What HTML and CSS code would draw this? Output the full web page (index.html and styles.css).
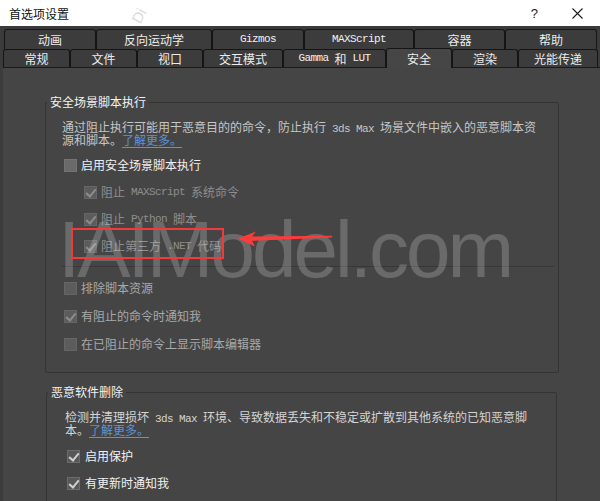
FILE: index.html
```html
<!DOCTYPE html>
<html lang="zh-CN">
<head>
<meta charset="utf-8">
<title>首选项设置</title>
<link rel="stylesheet" href="styles.css">
</head>
<body>
<div class="titlebar">
  <span class="title">首选项设置</span>
  <span class="help">?</span>
  <svg class="close" viewBox="0 0 11 11"><path d="M0.5 0.5 L10.5 10.5 M10.5 0.5 L0.5 10.5" stroke="#1a1a1a" stroke-width="1.1" fill="none"/></svg>
  <span class="titlemark">Di</span>
</div>
<div class="tabstrip">
  <div class="tabrow row1">
    <div class="tab">动画</div>
    <div class="tab">反向运动学</div>
    <div class="tab"><span class="en">Gizmos</span></div>
    <div class="tab"><span class="en">MAXScript</span></div>
    <div class="tab">容器</div>
    <div class="tab">帮助</div>
  </div>
  <div class="tabrow row2">
    <div class="tab">常规</div>
    <div class="tab">文件</div>
    <div class="tab">视口</div>
    <div class="tab">交互模式</div>
    <div class="tab"><span class="en">Gamma </span>和<span class="en"> LUT</span></div>
    <div class="tab active">安全</div>
    <div class="tab">渲染</div>
    <div class="tab">光能传递</div>
  </div>
</div>
<div class="panel">
  <fieldset class="group g1">
    <legend>安全场景脚本执行</legend>
    <div class="gbody">
      <p class="desc">通过阻止执行可能用于恶意目的的命令，防止执行<span class="en"> 3ds Max </span>场景文件中嵌入的恶意脚本资源和脚本。<span class="link">了解更多。</span></p>
      <div class="opts first">
        <label class="cb on"><span class="box"></span>启用安全场景脚本执行</label>
        <label class="cb dim sub"><span class="box chk"></span>阻止<span class="en"> MAXScript </span>系统命令</label>
        <label class="cb dim sub"><span class="box chk"></span>阻止<span class="en"> Python </span>脚本</label>
        <label class="cb dim sub"><span class="box chk"></span>阻止第三方<span class="en"> .NET </span>代码</label>
      </div>
      <hr class="divider">
      <div class="opts second">
        <label class="cb mid"><span class="box"></span>排除脚本资源</label>
        <label class="cb mid"><span class="box chk"></span>有阻止的命令时通知我</label>
        <label class="cb mid"><span class="box"></span>在已阻止的命令上显示脚本编辑器</label>
      </div>
    </div>
  </fieldset>
  <fieldset class="group g2">
    <legend>恶意软件删除</legend>
    <div class="gbody">
      <p class="desc">检测并清理损坏<span class="en"> 3ds Max </span>环境、导致数据丢失和不稳定或扩散到其他系统的已知恶意脚本。<span class="link">了解更多。</span></p>
      <div class="opts third">
        <label class="cb bright"><span class="box chk"></span>启用保护</label>
        <label class="cb bright"><span class="box chk"></span>有更新时通知我</label>
      </div>
    </div>
  </fieldset>
</div>
<div class="watermark">IAIModel.com</div>
<div class="redbox"></div>
<svg class="arrow" viewBox="0 0 100 22"><polygon points="2,10.5 20,3.5 16,8.5 96,7.8 96,9.6 16,12.8 19,18.5" fill="#ff3a3a"/></svg>
</body>
</html>
```
FILE: styles.css
```css
* { box-sizing: border-box; margin: 0; padding: 0; }
html, body { width: 600px; height: 501px; overflow: hidden; }
body {
  background: #3c3c3c;
  font-family: "Noto Sans CJK SC", "Noto Sans", sans-serif;
  font-size: 12px;
  color: #ddd;
  position: relative;
}
.en {
  font-family: "Liberation Mono", monospace;
  font-size: 11px;
  letter-spacing: -0.6px;
  white-space: pre;
  line-height: 0;
}
.titlebar {
  height: 26px;
  background: #fff;
  color: #111;
  display: flex;
  align-items: center;
  padding-left: 9px;
  position: relative;
}
.title { flex: 1; font-size: 12px; }
.help { font-family: "Liberation Sans", sans-serif; font-size: 13px; margin-right: 34px; color: #222; }
.close { width: 11px; height: 11px; margin-right: 17px; }
.titlemark {
  position: absolute;
  left: 128px;
  top: 0;
  font-family: "Liberation Sans", sans-serif;
  font-size: 15px;
  color: #dcdcdc;
  transform: rotate(-62deg);
  transform-origin: left top;
  translate: 0 18px;
}
.tabstrip { background: #3b3b3b; padding-top: 3px; }
.tabrow { display: grid; }
.row1 { grid-template-columns: 92px 116px 92px 110px 91px 92px; margin-left: 4px; height: 20px; }
.row2 { grid-template-columns: 67px 67px 66px 80px 103px 66px 66px 80px; margin-left: 3px; height: 18px; }
.tab {
  border: 1px solid #151515;
  border-bottom: none;
  border-radius: 3px 3px 0 0;
  background: #3c3c3c;
  color: #ececec;
  display: flex;
  align-items: center;
  justify-content: center;
  line-height: 1;
}
.tab .en { color: #f0f0f0; line-height: 1; }
.tab.active {
  background: #464646;
  margin-top: -1px;
  margin-bottom: -1px;
  position: relative;
  z-index: 1;
}
.panel {
  border-top: 1px solid #1a1a1a;
  margin-left: 3px;
  height: 434px;
  background: #454545;
  padding-top: 26px;
}
.group {
  border: 1px solid #343434;
  border-radius: 2px;
  padding: 0;
}
.group legend {
  line-height: 16px;
  margin-left: 1px;
  padding: 0 3px;
  color: #f2f2f2;
}
.g1 { margin-left: 42px; width: 514px; }
.g1 .gbody { padding: 10px 0 21px 16px; }
.g2 { margin: 11px 0 0 43px; width: 511px; }
.g2 .gbody { padding: 10px 0 40px 18px; }
.desc { line-height: 13px; }
.g1 .desc { width: 478px; color: #c6c6c6; }
.g2 .desc { width: 468px; color: #d4d4d4; }
.link { color: #5b93d8; text-decoration: underline; text-underline-offset: 2px; }
.opts { display: flex; flex-direction: column; margin-left: 2px; }
.first { margin-top: 12px; gap: 13px; }
.second { margin-top: 14px; gap: 14px; }
.third { margin-top: 13px; gap: 13px; }
.cb { display: flex; align-items: center; height: 14px; line-height: 14px; }
.cb.sub { margin-left: 20px; }
.box {
  width: 13px;
  height: 13px;
  background: #5c5c5c;
  border: 1px solid #666;
  margin-right: 4px;
  position: relative;
  flex: none;
}
.cb.on { color: #f0f0f0; }
.cb.on .box { background: #6a6a6a; border-color: #747474; }
.cb.dim { color: #8e8e8e; }
.cb.mid { color: #a8a8a8; }
.cb.bright { color: #f2f2f2; }
.cb.bright .box { background: #575757; border-color: #6c6c6c; margin-right: 5px; }
.box.chk::after {
  content: "";
  position: absolute;
  left: 3px;
  top: 0;
  width: 4px;
  height: 8px;
  border: solid #8c8c8c;
  border-width: 0 2px 2px 0;
  transform: rotate(40deg);
}
.cb.bright .box.chk::after { border-color: #d0d0d0; }
.divider {
  border: none;
  border-top: 1px solid #383838;
  margin-top: 13px;
  width: 492px;
}
.watermark {
  position: absolute;
  left: 58px;
  top: 210px;
  font-family: "Liberation Sans", sans-serif;
  font-size: 80px;
  line-height: 80px;
  letter-spacing: -3px;
  color: rgba(255, 255, 255, 0.2);
  white-space: nowrap;
  pointer-events: none;
}
.redbox {
  position: absolute;
  left: 71px;
  top: 228px;
  width: 153px;
  height: 31px;
  border: 2px solid #f23a3a;
}
.arrow {
  position: absolute;
  left: 236px;
  top: 228px;
  width: 100px;
  height: 22px;
}
```
